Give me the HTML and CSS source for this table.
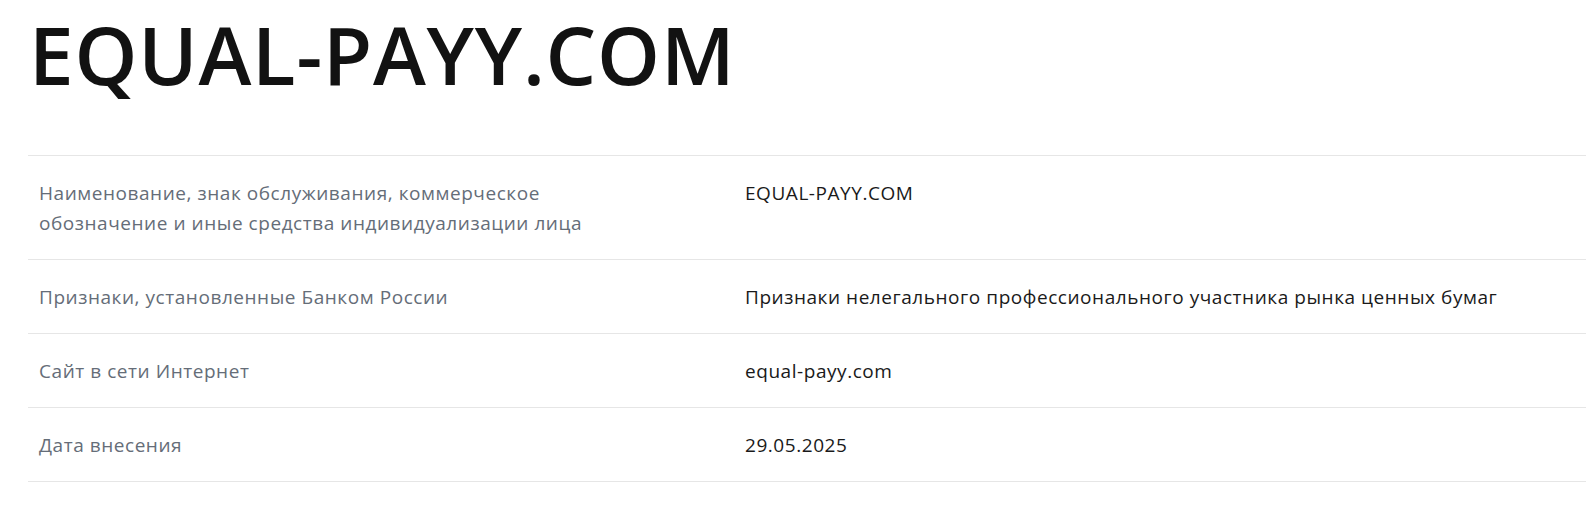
FILE: index.html
```html
<!DOCTYPE html>
<html lang="ru">
<head>
<meta charset="utf-8">
<link rel="stylesheet" href="styles.css">
</head>
<body>
<div class="page">
  <h1 class="title">EQUAL-PAYY.COM</h1>
  <div class="table">
    <div class="row">
      <div class="label">Наименование, знак обслуживания, коммерческое обозначение и иные средства индивидуализации лица</div>
      <div class="value">EQUAL-PAYY.COM</div>
    </div>
    <div class="row">
      <div class="label">Признаки, установленные Банком России</div>
      <div class="value">Признаки нелегального профессионального участника рынка ценных бумаг</div>
    </div>
    <div class="row">
      <div class="label">Сайт в сети Интернет</div>
      <div class="value">equal-payy.com</div>
    </div>
    <div class="row">
      <div class="label">Дата внесения</div>
      <div class="value">29.05.2025</div>
    </div>
  </div>
</div>
</body>
</html>
```
FILE: styles.css
```css
html, body {
  margin: 0;
  padding: 0;
  background: #ffffff;
}
.page {
  padding: 0 0 0 28px;
}
.title {
  margin: 0;
  padding: 0 0 0 1px;
  height: 155px;
  box-sizing: border-box;
  font-family: "Open Sans", sans-serif;
  font-weight: 600;
  font-size: 80px;
  line-height: 108px;
  letter-spacing: 0.8px;
  color: #121212;
}
.table {
  border-top: 1px solid #e6e6e6;
}
.row {
  display: grid;
  grid-template-columns: 705px 1fr;
  border-bottom: 1px solid #e6e6e6;
  padding: 22px 0 21px;
}
.label {
  padding-left: 11px;
  width: 560px;
  font-family: "Open Sans", sans-serif;
  font-size: 19px;
  letter-spacing: 0.55px;
  line-height: 30px;
  color: #656d78;
}
.value {
  padding-left: 12px;
  font-family: "Open Sans", sans-serif;
  font-size: 19px;
  letter-spacing: 0.55px;
  line-height: 30px;
  color: #1a1a1a;
}
```
